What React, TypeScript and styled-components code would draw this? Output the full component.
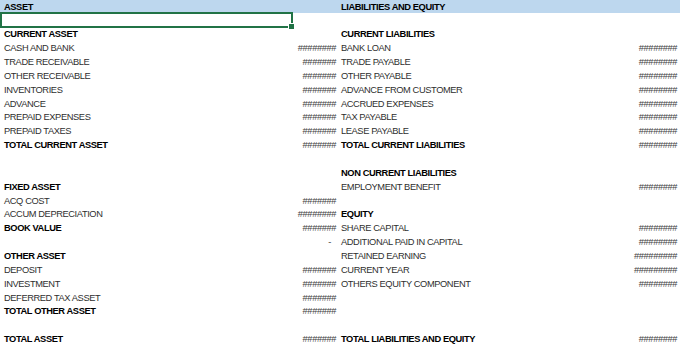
import React from 'react';
import styled, { createGlobalStyle } from 'styled-components';

const GlobalStyle = createGlobalStyle`
  html, body {
    margin: 0;
    padding: 0;
    background: #fff;
    overflow: hidden;
  }
  body {
    font-family: 'Liberation Sans', Arial, sans-serif;
  }
`;

const Sheet = styled.div`
  width: 680px;
  height: 350px;
  display: flex;
  flex-direction: column;
  font-size: 9.3px;
  letter-spacing: -0.4px;
`;

const Row = styled.div<{ $head?: boolean }>`
  display: grid;
  grid-template-columns: 293px 45px 292px 50px;
  height: ${p => (p.$head ? '13px' : '13.87px')};
  background: ${p => (p.$head ? '#bdd7ee' : 'transparent')};
  flex-shrink: 0;
`;

const Label = styled.div<{ $bold?: boolean; $selected?: boolean; $first?: boolean }>`
  position: relative;
  display: flex;
  align-items: center;
  padding-top: 1px;
  padding-left: ${p => (p.$first ? '4px' : '3px')};
  color: ${p => (p.$bold ? '#000' : '#2e2e2e')};
  font-weight: ${p => (p.$bold ? 700 : 400)};
  white-space: nowrap;
  overflow: hidden;
  box-sizing: border-box;
  ${p =>
    p.$selected &&
    `
    overflow: visible;
    border: 2px solid #217346;
    margin-top: -1px;
    height: 16px;
    &::after {
      content: '';
      position: absolute;
      right: -4px;
      bottom: -4px;
      width: 5px;
      height: 5px;
      background: #217346;
      border: 1px solid #fff;
    }
  `}
`;

const Value = styled.div<{ $pad?: number }>`
  display: flex;
  align-items: center;
  justify-content: flex-end;
  padding-top: 1px;
  padding-right: ${p => p.$pad ?? 2}px;
  color: #404040;
  white-space: nowrap;
  overflow: hidden;
  box-sizing: border-box;
`;

type Line = {
  a?: string;
  aBold?: boolean;
  b?: string;
  c?: string;
  cBold?: boolean;
  d?: string;
};

const H7 = '#######';
const H8 = '########';
const H9 = '#########';

const lines: Line[] = [
  {},
  { a: 'CURRENT ASSET', aBold: true, c: 'CURRENT LIABILITIES', cBold: true },
  { a: 'CASH AND BANK', b: H8, c: 'BANK LOAN', d: H8 },
  { a: 'TRADE RECEIVABLE', b: H7, c: 'TRADE PAYABLE', d: H8 },
  { a: 'OTHER RECEIVABLE', b: H7, c: 'OTHER PAYABLE', d: H8 },
  { a: 'INVENTORIES', b: H7, c: 'ADVANCE FROM CUSTOMER', d: H8 },
  { a: 'ADVANCE', b: H7, c: 'ACCRUED EXPENSES', d: H8 },
  { a: 'PREPAID EXPENSES', b: H7, c: 'TAX PAYABLE', d: H8 },
  { a: 'PREPAID TAXES', b: H7, c: 'LEASE PAYABLE', d: H8 },
  { a: 'TOTAL CURRENT ASSET', aBold: true, b: H7, c: 'TOTAL CURRENT LIABILITIES', cBold: true, d: H8 },
  {},
  { c: 'NON CURRENT LIABILITIES', cBold: true },
  { a: 'FIXED ASSET', aBold: true, c: 'EMPLOYMENT BENEFIT', d: H8 },
  { a: 'ACQ COST', b: H7 },
  { a: 'ACCUM DEPRECIATION', b: H8, c: 'EQUITY', cBold: true },
  { a: 'BOOK VALUE', aBold: true, b: H7, c: 'SHARE CAPITAL', d: H8 },
  { b: '-', c: 'ADDITIONAL PAID IN CAPITAL', d: H8 },
  { a: 'OTHER ASSET', aBold: true, c: 'RETAINED EARNING', d: H9 },
  { a: 'DEPOSIT', b: H7, c: 'CURRENT YEAR', d: H9 },
  { a: 'INVESTMENT', b: H7, c: 'OTHERS EQUITY COMPONENT', d: H8 },
  { a: 'DEFERRED TAX ASSET', b: H7 },
  { a: 'TOTAL OTHER ASSET', aBold: true, b: H7 },
  {},
  { a: 'TOTAL ASSET', aBold: true, b: H7, c: 'TOTAL LIABILITIES AND EQUITY', cBold: true, d: H8 },
];

const App = () => {
  return (
    <>
      <GlobalStyle />
      <Sheet>
        <Row $head>
          <Label $first $bold>ASSET</Label>
          <Value />
          <Label $bold>LIABILITIES AND EQUITY</Label>
          <Value />
        </Row>
        {lines.map((l, i) => (
          <Row key={i}>
            <Label $first $bold={l.aBold} $selected={i === 0}>{l.a}</Label>
            <Value $pad={l.b === '-' ? 7 : 2}>{l.b}</Value>
            <Label $bold={l.cBold}>{l.c}</Label>
            <Value $pad={3}>{l.d}</Value>
          </Row>
        ))}
      </Sheet>
    </>
  );
};

export default App;
